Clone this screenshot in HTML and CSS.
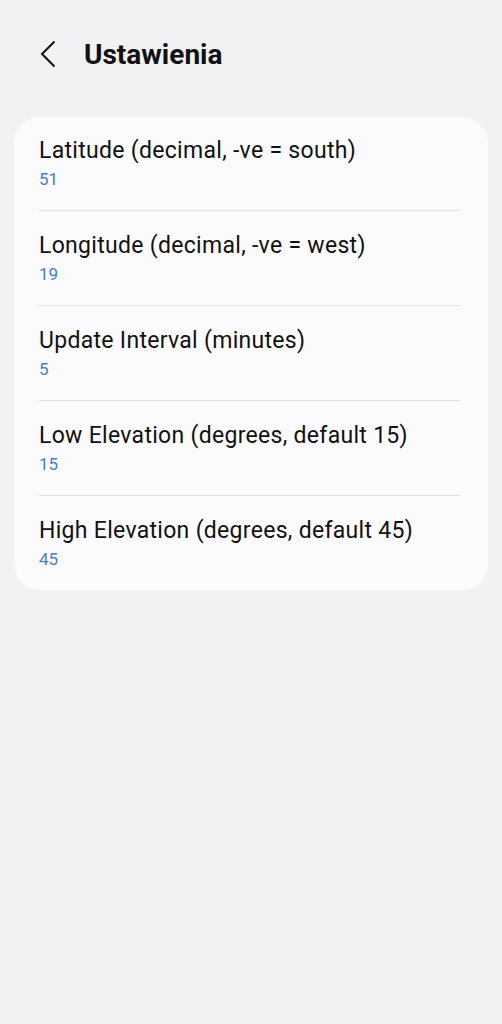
FILE: index.html
```html
<!DOCTYPE html>
<html lang="pl">
<head>
<meta charset="utf-8">
<link rel="stylesheet" href="styles.css">
</head>
<body>
<div class="topbar">
  <svg class="back" width="16" height="28" viewBox="0 0 16 28"><path d="M14.5 1.5 L2 14 L14.5 26.5" fill="none" stroke="#111" stroke-width="2"/></svg>
  <h1>Ustawienia</h1>
</div>
<div class="card">
  <div class="pref">
    <div class="pref_title">Latitude (decimal, -ve = south)</div>
    <div class="pref_value">51</div>
  </div>
  <div class="pref">
    <div class="pref_title">Longitude (decimal, -ve = west)</div>
    <div class="pref_value">19</div>
  </div>
  <div class="pref">
    <div class="pref_title">Update Interval (minutes)</div>
    <div class="pref_value">5</div>
  </div>
  <div class="pref">
    <div class="pref_title">Low Elevation (degrees, default 15)</div>
    <div class="pref_value">15</div>
  </div>
  <div class="pref">
    <div class="pref_title">High Elevation (degrees, default 45)</div>
    <div class="pref_value">45</div>
  </div>
</div>
</body>
</html>
```
FILE: styles.css
```css
* {box-sizing: border-box;}
body {margin: 0; background: #f2f2f4; font-family: Roboto, "Noto Sans", sans-serif; color: #111;}
.topbar {height: 108px; display: flex; align-items: center; padding-left: 40px; gap: 28px;}
.topbar h1 {margin: 0; font-size: 28px; font-weight: 700; color: #111;}
.card {margin: 9px 14px 0; background: #fbfbfd; border-radius: 26px; padding: 0 28px 0 25px;}
.pref {padding: 21px 0; border-top: 1px solid #e1e1e3;}
.pref:first-child {border-top: none; padding-top: 20px;}
.pref_title {font-size: 23px; line-height: 28px; letter-spacing: 0.3px; color: #111;}
.pref_value {font-size: 17px; line-height: 20px; margin-top: 4px; color: #4a7bc6;}
```
